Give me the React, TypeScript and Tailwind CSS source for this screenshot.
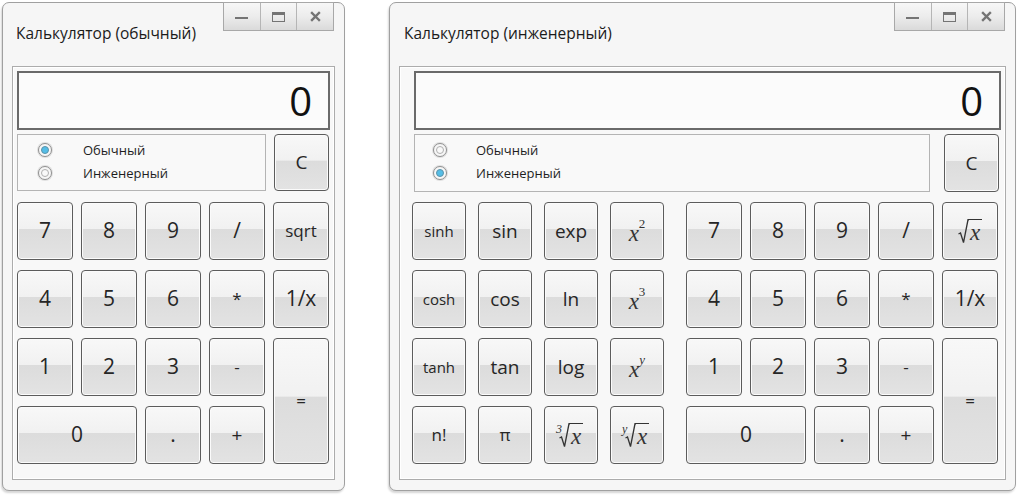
import React from "react";

const FONT = { fontFamily: '"Open Sans", "Noto Sans", sans-serif' };
const SERIF = { fontFamily: '"Liberation Serif", "DejaVu Serif", serif' };

function Btn({ children, className = "" }: { children?: React.ReactNode; className?: string }) {
  return (
    <div
      className={`flex items-center justify-center rounded-[4px] border-[1.5px] border-[#5c5c5c] bg-[linear-gradient(180deg,#f8f8f8_0%,#f1f1f1_46%,#dcdcdc_47%,#e3e3e3_100%)] shadow-[inset_0_0_0_1px_#fbfbfb] text-[#262626] ${className}`}
    >
      {children}
    </div>
  );
}

function Radio({ checked }: { checked: boolean }) {
  return (
    <span className="flex h-[14px] w-[14px] items-center justify-center rounded-full border border-[#909090] bg-[#f7f7f7] shadow-[0_0_0_1px_#e0e0e0]">
      {checked ? (
        <span className="h-[8px] w-[8px] rounded-full border border-[#5b93aa] bg-[#55bde6]" />
      ) : (
        <span className="h-[8px] w-[8px] rounded-full border border-[#b0b0b0] bg-[#f9f9f9]" />
      )}
    </span>
  );
}

function Controls() {
  return (
    <div className="absolute right-[10px] top-[-1px] flex h-[29px] w-[111px] border border-[#a8a8a8] bg-[linear-gradient(180deg,#f7f7f7_0%,#ececec_50%,#dadada_100%)]">
      <div className="flex flex-1 items-center justify-center border-r border-[#b5b5b5]">
        <span className="mt-[2px] block h-[2px] w-[13px] bg-[#747474]" />
      </div>
      <div className="flex flex-1 items-center justify-center border-r border-[#b5b5b5]">
        <span className="block h-[10px] w-[13px] border-[1.5px] border-t-[3px] border-[#747474]" />
      </div>
      <div className="flex flex-1 items-center justify-center">
        <svg width="11" height="11" viewBox="0 0 11 11">
          <path d="M2 2 L9 9 M9 2 L2 9" stroke="#747474" strokeWidth="2.4" strokeLinecap="square" />
        </svg>
      </div>
    </div>
  );
}

function Sup({ sup, italic }: { sup: string; italic?: boolean }) {
  return (
    <span className="relative inline-flex items-start text-[#333]" style={SERIF}>
      <span className="mt-[5px] text-[23px] italic leading-none">x</span>
      <span className={`ml-[0px] text-[13px] leading-none ${italic ? "italic" : ""}`}>{sup}</span>
    </span>
  );
}

function Root({ idx }: { idx?: string }) {
  return (
    <span className="relative inline-flex items-start text-[#333]" style={SERIF}>
      {idx && (
        <span className="absolute left-[-3px] top-[0px] text-[12px] italic leading-none">{idx}</span>
      )}
      <svg width="11" height="25" viewBox="0 0 11 25" className="block">
        <path d="M0.5 15 L2.5 14 L5.5 23.5 L10 0.75 L11 0.75" fill="none" stroke="#333" strokeWidth="1.3" />
      </svg>
      <span className="block h-[25px] border-t-[1.3px] border-[#333] pl-[1px] pr-[2px] text-[23px] italic leading-[25px]">
        x
      </span>
    </span>
  );
}

function NumPad({ sqrt }: { sqrt: React.ReactNode }) {
  const d = "text-[21px]";
  return (
    <div className="grid grid-cols-[repeat(5,56px)] grid-rows-[repeat(4,58px)] gap-x-[8px] gap-y-[10px]">
      <Btn className={d}>7</Btn>
      <Btn className={d}>8</Btn>
      <Btn className={d}>9</Btn>
      <Btn className={d}>/</Btn>
      <Btn>{sqrt}</Btn>
      <Btn className={d}>4</Btn>
      <Btn className={d}>5</Btn>
      <Btn className={d}>6</Btn>
      <Btn className="text-[17px]">*</Btn>
      <Btn className="text-[21px]">1/x</Btn>
      <Btn className={d}>1</Btn>
      <Btn className={d}>2</Btn>
      <Btn className={d}>3</Btn>
      <Btn className="text-[17px]">-</Btn>
      <Btn className="row-span-2 text-[17px]">=</Btn>
      <Btn className={`col-span-2 ${d}`}>0</Btn>
      <Btn className={d}>.</Btn>
      <Btn className="text-[19px]">+</Btn>
    </div>
  );
}

function Modes({ eng, circleX, labelX }: { eng: boolean; circleX: string; labelX: string }) {
  return (
    <div className={`flex flex-1 flex-col gap-[5px] border border-[#b4b4b4] bg-[#f9f9f9] pt-[6px] text-[13px] leading-[18px] text-[#1e1e1e] ${circleX}`}>
      <div className="flex h-[18px] items-center">
        <Radio checked={!eng} />
        <span className={labelX}>Обычный</span>
      </div>
      <div className="flex h-[18px] items-center">
        <Radio checked={eng} />
        <span className={labelX}>Инженерный</span>
      </div>
    </div>
  );
}

function Display() {
  return (
    <div className="flex h-[59px] items-center justify-end border-2 border-[#6a6a6a] bg-[#fbfbfb] pr-[16px] text-[40px] leading-none text-[#111]">
      0
    </div>
  );
}

export default function App() {
  return (
    <div className="flex h-[497px] w-[1025px] items-start gap-[44px] bg-white pl-[2px] pt-[2px]" style={FONT}>
      {/* Standard */}
      <div className="relative flex h-[489px] w-[343px] flex-col rounded-[7px] border border-[#a0a0a0] bg-[#f6f6f6] shadow-[-1px_2px_2px_#d6d6d6]">
        <Controls />
        <div className="h-[63px] pl-[13px] pt-[19px] text-[15.5px] text-[#1b1b1b]">Калькулятор (обычный)</div>
        <div className="mx-[9px] flex flex-col border border-[#acacac] bg-[#f8f8f8] px-[4px] pb-[15px] pt-[4px] shadow-[inset_0_0_0_1px_#ffffff]">
          <Display />
          <div className="mt-[4px] flex h-[57px] gap-[8px] pr-[1px]">
            <Modes eng={false} circleX="pl-[20px]" labelX="ml-[31px]" />
            <Btn className="w-[55px] text-[19px]">C</Btn>
          </div>
          <div className="mt-[11px]">
            <NumPad sqrt={<span className="text-[17px]">sqrt</span>} />
          </div>
        </div>
      </div>

      {/* Engineering */}
      <div className="relative flex h-[489px] w-[627px] flex-col rounded-[7px] border border-[#a0a0a0] bg-[#f6f6f6] shadow-[-1px_2px_2px_#d6d6d6]">
        <Controls />
        <div className="h-[63px] pl-[14px] pt-[19px] text-[15.5px] text-[#1b1b1b]">Калькулятор (инженерный)</div>
        <div className="mx-[9px] flex flex-col border border-[#acacac] bg-[#f8f8f8] pb-[15px] pl-[12px] pr-[4px] pt-[4px] shadow-[inset_0_0_0_1px_#ffffff]">
          <div className="ml-[2px]">
            <Display />
          </div>
          <div className="ml-[2px] mt-[4px] flex h-[58px] gap-[14px] pr-[2px]">
            <Modes eng={true} circleX="pl-[18px]" labelX="ml-[29px]" />
            <Btn className="w-[55px] text-[19px]">C</Btn>
          </div>
          <div className="mt-[10px] flex">
            <div className="grid grid-cols-[repeat(4,54px)] grid-rows-[repeat(4,58px)] gap-x-[12px] gap-y-[10px]">
              <Btn className="text-[15px]">sinh</Btn>
              <Btn className="text-[19px]">sin</Btn>
              <Btn className="text-[19px]">exp</Btn>
              <Btn><Sup sup="2" /></Btn>
              <Btn className="text-[15px]">cosh</Btn>
              <Btn className="text-[19px]">cos</Btn>
              <Btn className="text-[19px]">ln</Btn>
              <Btn><Sup sup="3" /></Btn>
              <Btn className="text-[15px]">tanh</Btn>
              <Btn className="text-[19px]">tan</Btn>
              <Btn className="text-[19px]">log</Btn>
              <Btn><Sup sup="y" italic /></Btn>
              <Btn className="text-[17px]">n!</Btn>
              <Btn className="text-[17px]">π</Btn>
              <Btn><Root idx="3" /></Btn>
              <Btn><Root idx="y" /></Btn>
            </div>
            <div className="ml-[22px]">
              <NumPad sqrt={<Root />} />
            </div>
          </div>
        </div>
      </div>
    </div>
  );
}
